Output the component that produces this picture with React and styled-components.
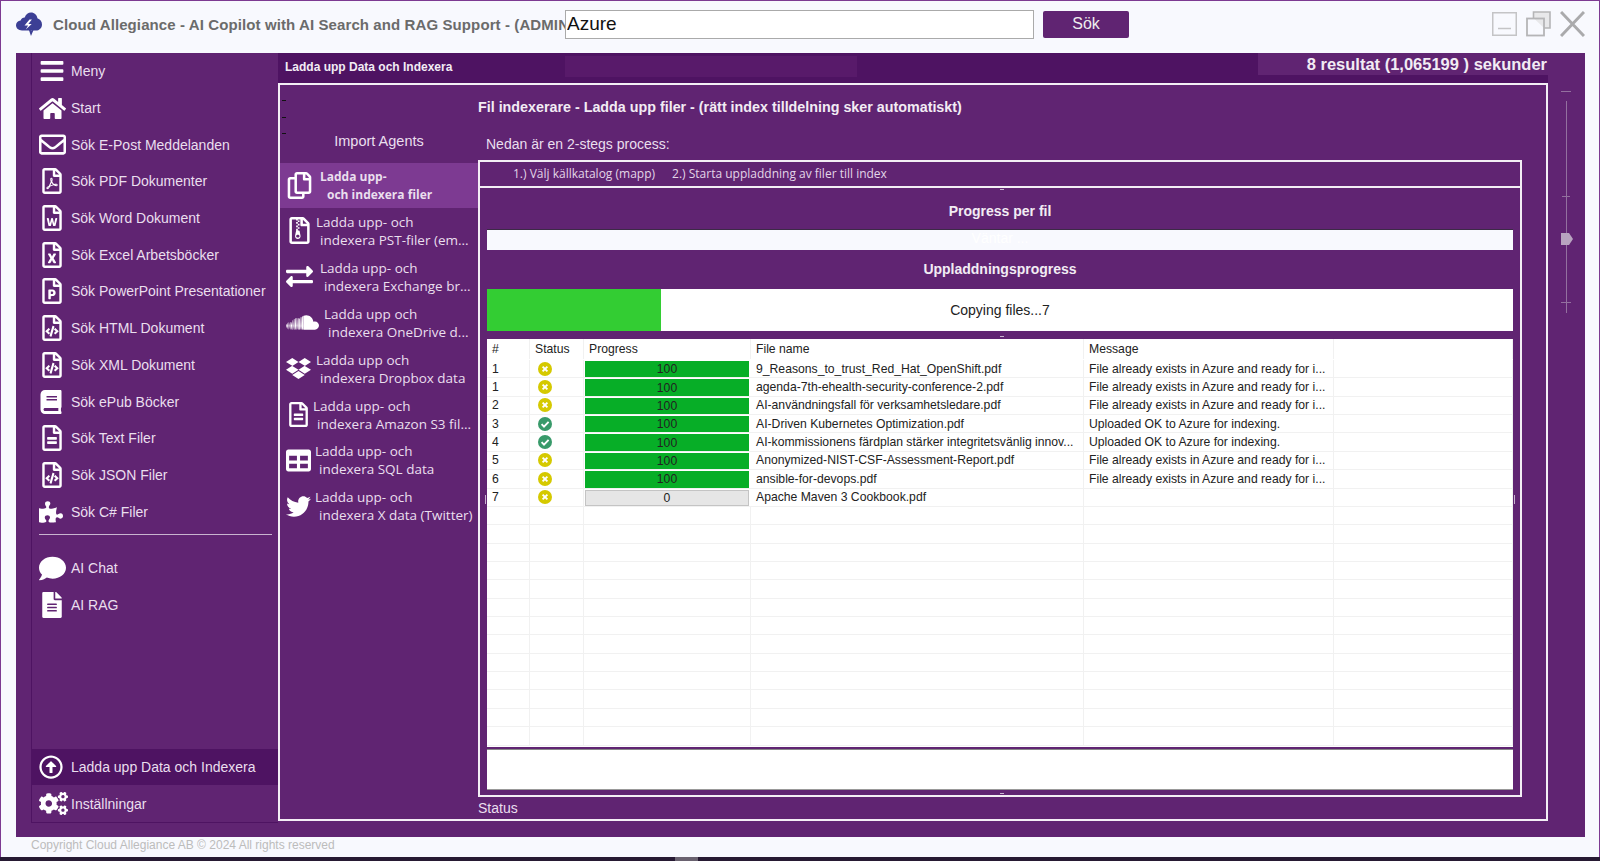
import styled, { createGlobalStyle } from "styled-components";
import {
  FaBars,
  FaHome,
  FaRegEnvelope,
  FaRegFilePdf,
  FaRegFileWord,
  FaRegFileExcel,
  FaRegFilePowerpoint,
  FaRegFileCode,
  FaBook,
  FaRegFileAlt,
  FaPuzzlePiece,
  FaComment,
  FaFileAlt,
  FaRegArrowAltCircleUp,
  FaCogs,
  FaRegCopy,
  FaRegFileArchive,
  FaExchangeAlt,
  FaSoundcloud,
  FaDropbox,
  FaTable,
  FaTwitter,
} from "react-icons/fa";

const purple = "#602472";
const dark = "#4e1362";
const light = "#7d3a92";
const paper = "#f8f9fe";

const GlobalStyle = createGlobalStyle`
  html, body {
    margin: 0;
    padding: 0;
    overflow: hidden;
    background: ${paper};
  }
  * {
    box-sizing: border-box;
  }
`;

const Window = styled.div`
  width: 1600px;
  height: 861px;
  display: flex;
  flex-direction: column;
  background: ${paper};
  border-top: 1px solid ${light};
  border-left: 1px solid ${light};
  border-right: 1px solid ${light};
  font-family: "Liberation Sans", Arial, sans-serif;
`;

const TitleBar = styled.header`
  height: 52px;
  flex: none;
  display: flex;
  align-items: center;
  padding: 0 0 6px 15px;
`;

const Logo = styled.svg`
  width: 26px;
  height: 24px;
  flex: none;
`;

const AppTitle = styled.div`
  width: 512px;
  margin-left: 11px;
  flex: none;
  overflow: hidden;
  white-space: nowrap;
  font-size: 15px;
  font-weight: 700;
  letter-spacing: 0.1px;
  color: #6b6b6b;
`;

const SearchInput = styled.input`
  width: 469px;
  height: 29px;
  flex: none;
  padding: 0 1px;
  border: 1px solid #aaa;
  background: #fff;
  outline: none;
  font-family: "Liberation Sans", Arial, sans-serif;
  font-size: 19px;
  color: #111;
`;

const SearchButton = styled.button`
  width: 86px;
  height: 27px;
  margin-left: 9px;
  flex: none;
  border: none;
  border-radius: 2px;
  background: ${purple};
  color: #eee;
  font-family: "Liberation Sans", Arial, sans-serif;
  font-size: 16px;
`;

const WindowButtons = styled.div`
  margin-left: auto;
  margin-right: 14px;
  display: flex;
  align-items: center;
  gap: 9px;
`;

const WindowIcon = styled.svg`
  width: 25px;
  height: 26px;
  display: block;
`;

const Main = styled.main`
  flex: 1;
  min-height: 0;
  margin: 0 14px 0 15px;
  padding-left: 15px;
  display: flex;
  background: ${purple};
`;

const Nav = styled.nav`
  width: 247px;
  flex: none;
  margin-bottom: 14px;
  display: flex;
  flex-direction: column;
  border-left: 1px solid ${dark};
  border-bottom: 1px solid ${dark};
`;

const NavRow = styled.div`
  height: 36.7px;
  flex: none;
  display: flex;
  align-items: center;
  padding-left: 7px;
  background: ${(props) => (props.$active ? dark : "transparent")};
  color: #eadfee;
  font-size: 14px;
  white-space: nowrap;
`;

const NavIcon = styled.span`
  width: 32px;
  flex: none;
  display: flex;
  align-items: center;
  color: #fff;
  font-size: ${(props) => props.$size || 25}px;
`;

const NavDivider = styled.div`
  height: 1px;
  margin: 4px 6px 15px 7px;
  background: #c9b4d0;
  flex: none;
`;

const NavSpacer = styled.div`
  flex: 1;
`;

const Content = styled.section`
  width: 1270px;
  flex: none;
  display: flex;
  flex-direction: column;
`;

const HeaderStrip = styled.div`
  height: 30px;
  flex: none;
  display: flex;
  background: ${dark};
  color: #f2ecf4;
`;

const PageName = styled.div`
  width: 287px;
  padding: 7px 0 0 7px;
  flex: none;
  font-size: 12px;
  font-weight: 700;
`;

const HeaderPatch = styled.div`
  width: 292px;
  height: 21px;
  margin-top: 3px;
  flex: none;
  background: #581a6a;
`;

const ResultBox = styled.div`
  width: 290px;
  height: 22px;
  margin-left: auto;
  padding-right: 1px;
  flex: none;
  text-align: right;
  background: ${purple};
  color: #f2ecf4;
  font-size: 16.5px;
  font-weight: 700;
  line-height: 22px;
  white-space: nowrap;
`;

const Panel = styled.div`
  position: relative;
  height: 738px;
  flex: none;
  display: flex;
  border: 2px solid #f3eef5;
`;

const GripTick = styled.i`
  position: absolute;
  left: 2px;
  top: ${(props) => props.$top}px;
  width: 4px;
  height: 1px;
  background: #111;
`;

const Agents = styled.aside`
  width: 198px;
  flex: none;
  display: flex;
  flex-direction: column;
`;

const AgentsTitle = styled.div`
  height: 78px;
  flex: none;
  padding-top: 48px;
  text-align: center;
  color: #eadfee;
  font-size: 14.5px;
`;

const AgentRow = styled.div`
  height: ${(props) => (props.$active ? 45 : 45.9)}px;
  flex: none;
  display: flex;
  align-items: center;
  background: ${(props) => (props.$active ? light : "transparent")};
  padding-left: 6px;
  color: #eadfee;
  font-family: "Open Sans", "Noto Sans", sans-serif;
  font-size: ${(props) => (props.$active ? 12 : 13.5)}px;
  font-weight: ${(props) => (props.$active ? 700 : 400)};
  line-height: 18px;
  white-space: nowrap;
`;

const AgentIcon = styled.span`
  width: ${(props) => props.$width}px;
  flex: none;
  display: flex;
  color: #fff;
  font-size: ${(props) => props.$size || 27}px;
`;

const AgentLine = styled.div`
  padding-left: ${(props) => (props.$indent ? props.$indent : 0)}px;
`;

const Workspace = styled.div`
  flex: 1;
  min-width: 0;
  display: flex;
  flex-direction: column;
  padding-right: 24px;
`;

const PageTitle = styled.div`
  height: 43px;
  flex: none;
  padding-top: 14px;
  color: #f2ecf4;
  font-size: 14.3px;
  font-weight: 700;
`;

const Intro = styled.div`
  height: 32px;
  flex: none;
  padding: 8px 0 0 8px;
  color: #eadfee;
  font-size: 14px;
`;

const TabBox = styled.div`
  position: relative;
  height: 637px;
  flex: none;
  display: flex;
  flex-direction: column;
  border: 2px solid #f3eef5;
`;

const TabRow = styled.div`
  height: 26px;
  flex: none;
  display: flex;
  align-items: center;
  gap: 17px;
  padding: 0 0 1px 33px;
  border-bottom: 2px solid #f3eef5;
  color: #e3d6e8;
  font-family: "Open Sans", "Noto Sans", sans-serif;
  font-size: 12px;
`;

const TabBody = styled.div`
  flex: 1;
  min-height: 0;
  padding: 0 7px 0 7px;
  display: flex;
  flex-direction: column;
`;

const SectionTitle = styled.div`
  height: ${(props) => props.$height}px;
  flex: none;
  padding-top: ${(props) => props.$top}px;
  text-align: center;
  color: #f2ecf4;
  font-size: 14px;
  font-weight: 700;
`;

const FileBar = styled.div`
  height: 21px;
  flex: none;
  text-align: center;
  background: ${paper};
  border-top: 1px solid #3c2a46;
  color: #fff;
  font-size: 14px;
`;

const CopyBar = styled.div`
  position: relative;
  height: 42px;
  flex: none;
  display: flex;
  align-items: center;
  justify-content: center;
  background: #fff;
  color: #222;
  font-size: 14px;
`;

const CopyFill = styled.div`
  position: absolute;
  left: 0;
  top: 0;
  bottom: 0;
  background: #33cd33;
`;

const Grid = styled.div`
  height: 408px;
  flex: none;
  margin-top: 8px;
  background: #fff;
  overflow: hidden;
  color: #222;
  font-size: 12.2px;
`;

const GridRow = styled.div`
  height: ${(props) => (props.$head ? 21 : 18.37)}px;
  display: grid;
  grid-template-columns: 43px 54px 167px 333px 250px 1fr;
  border-bottom: 1px solid ${(props) => (props.$head ? "transparent" : "#f1f1f1")};
`;

const GridCell = styled.div`
  display: flex;
  align-items: center;
  justify-content: ${(props) => (props.$center ? "center" : "flex-start")};
  padding-left: ${(props) => (props.$center ? 0 : 5)}px;
  border-right: 1px solid #f1f1f1;
  white-space: nowrap;
  overflow: hidden;
`;

const ProgressCell = styled.div`
  margin: 1px 2px 0 1px;
  display: flex;
  align-items: center;
  justify-content: center;
  background: ${(props) => (props.$value > 0 ? "#07ae27" : "#e6e6e6")};
  border: 1px solid ${(props) => (props.$value > 0 ? "#07ae27" : "#c4c4c4")};
`;

const StatusIcon = styled.svg`
  width: 14px;
  height: 14px;
  margin-left: 3px;
  flex: none;
`;

const MessageBox = styled.div`
  height: 41px;
  flex: none;
  margin-top: 2px;
  background: #fff;
  border-top: 1px solid #888;
  border-bottom: 1px solid #999;
`;

const StatusLine = styled.div`
  flex: none;
  padding-top: 3px;
  color: #eadfee;
  font-size: 14px;
`;

const Slider = styled.div`
  position: relative;
  width: 37px;
  flex: none;
  height: 216px;
  margin-top: 30px;
`;

const SliderTrack = styled.div`
  position: absolute;
  left: 18px;
  top: 18px;
  width: 1px;
  height: 212px;
  background: #93709f;
`;

const SliderMark = styled.div`
  position: absolute;
  left: ${(props) => props.$left}px;
  top: ${(props) => props.$top}px;
  width: ${(props) => props.$width}px;
  height: 1px;
  background: #93709f;
`;

const SliderThumb = styled.svg`
  position: absolute;
  left: 13px;
  top: 150px;
  width: 12px;
  height: 12px;
`;

const CenterGrip = styled.i`
  position: absolute;
  left: 50%;
  top: ${(props) => props.$top}px;
  width: 4px;
  height: 1px;
  background: #c9b4d0;
`;

const SideGrip = styled.i`
  position: absolute;
  ${(props) => props.$side}: 5px;
  top: 333px;
  width: 1px;
  height: 9px;
  background: #c9b4d0;
`;

const Footer = styled.footer`
  height: 20px;
  flex: none;
  padding: 0 0 0 30px;
  color: #bcbcbc;
  font-size: 12px;
  line-height: 17px;
`;

const TaskStrip = styled.div`
  height: 4px;
  flex: none;
  margin: 0 -1px;
  padding-left: 660px;
  background: #271a33;
`;

const TaskItem = styled.div`
  width: 23px;
  height: 4px;
  margin-left: 15px;
  background: #6a6270;
`;

const navTop = [
  ["Meny", FaBars, 26],
  ["Start", FaHome, 27],
  ["Sök E-Post Meddelanden", FaRegEnvelope, 27],
  ["Sök PDF Dokumenter", FaRegFilePdf, 26],
  ["Sök Word Dokument", FaRegFileWord, 26],
  ["Sök Excel Arbetsböcker", FaRegFileExcel, 26],
  ["Sök PowerPoint Presentationer", FaRegFilePowerpoint, 26],
  ["Sök HTML Dokument", FaRegFileCode, 26],
  ["Sök XML Dokument", FaRegFileCode, 26],
  ["Sök ePub Böcker", FaBook, 24],
  ["Sök Text Filer", FaRegFileAlt, 26],
  ["Sök JSON Filer", FaRegFileCode, 26],
  ["Sök C# Filer", FaPuzzlePiece, 24],
];

const agents = [
  { lines: ["Ladda upp- och", "indexera PST-filer (em..."], Icon: FaRegFileArchive, width: 30, size: 27 },
  { lines: ["Ladda upp- och", "indexera Exchange br..."], Icon: FaExchangeAlt, width: 34, size: 27 },
  { lines: ["Ladda upp och", "indexera OneDrive d..."], Icon: FaSoundcloud, width: 38, size: 33 },
  { lines: ["Ladda upp och", "indexera Dropbox data"], Icon: FaDropbox, width: 30, size: 25 },
  { lines: ["Ladda upp- och", "indexera Amazon S3 fil..."], Icon: FaRegFileAlt, width: 27, size: 25 },
  { lines: ["Ladda upp- och", "indexera SQL data"], Icon: FaTable, width: 29, size: 25 },
  { lines: ["Ladda upp- och", "indexera X data (Twitter)"], Icon: FaTwitter, width: 29, size: 25 },
];

const existsMsg = "File already exists in Azure and ready for i...";
const okMsg = "Uploaded OK to Azure for indexing.";

const files = [
  { id: 1, ok: false, value: 100, name: "9_Reasons_to_trust_Red_Hat_OpenShift.pdf", message: existsMsg },
  { id: 1, ok: false, value: 100, name: "agenda-7th-ehealth-security-conference-2.pdf", message: existsMsg },
  { id: 2, ok: false, value: 100, name: "AI-användningsfall för verksamhetsledare.pdf", message: existsMsg },
  { id: 3, ok: true, value: 100, name: "AI-Driven Kubernetes Optimization.pdf", message: okMsg },
  { id: 4, ok: true, value: 100, name: "AI-kommissionens färdplan stärker integritetsvänlig innov...", message: okMsg },
  { id: 5, ok: false, value: 100, name: "Anonymized-NIST-CSF-Assessment-Report.pdf", message: existsMsg },
  { id: 6, ok: false, value: 100, name: "ansible-for-devops.pdf", message: existsMsg },
  { id: 7, ok: false, value: 0, name: "Apache Maven 3 Cookbook.pdf", message: "" },
];

const emptyRows = Array.from({ length: 13 }, (_, i) => i);

function Status({ ok }) {
  return (
    <StatusIcon viewBox="0 0 14 14">
      <circle cx="7" cy="7" r="7" fill={ok ? "#389a6a" : "#d5c900"} />
      {ok ? (
        <path d="M3.6 7.2 6 9.6 10.6 4.9" fill="none" stroke="#fff" strokeWidth="1.9" />
      ) : (
        <path d="M4.6 4.6 9.4 9.4M9.4 4.6 4.6 9.4" fill="none" stroke="#fff" strokeWidth="1.9" />
      )}
    </StatusIcon>
  );
}

export default function App() {
  return (
    <>
      <GlobalStyle />
      <Window>
        <TitleBar>
          <Logo viewBox="0 0 26 24">
            <path
              d="M6 18.5C2.5 18.5 0 16.3 0 13.3 0 10.7 2 8.7 4.6 8.4 5.2 6.6 6.8 5.4 8.7 5.4 9.9 2.4 12.3 0.6 15 0.6c3.4 0 6 2.5 6.4 5.7C24 7.2 26 9.5 26 12.4c0 3.4-2.6 6.1-6.2 6.1z"
              fill="#3c3f95"
            />
            <path d="M13.5 7.5 8.5 13.5h3.6L9.8 17.5l5.9-5.4h-3.4l3.6-4.6z" fill="#fff" />
            <path d="M12.4 16.5 15 24l2.6-6.2-2.4.8z" fill="#3c3f95" />
          </Logo>
          <AppTitle>Cloud Allegiance - AI Copilot with AI Search and RAG Support - (ADMIN)</AppTitle>
          <SearchInput defaultValue="Azure" />
          <SearchButton>Sök</SearchButton>
          <WindowButtons>
            <WindowIcon viewBox="0 0 25 26">
              <rect x="0.75" y="1.75" width="23.5" height="22.5" fill="none" stroke="#c4c4c6" strokeWidth="1.5" />
              <path d="M6 17.5h13" stroke="#c4c4c6" strokeWidth="1.5" />
            </WindowIcon>
            <WindowIcon viewBox="0 0 25 26">
              <path d="M7.5 7V1h16.5v16h-6" fill="#e8e8ea" stroke="#b5b5b7" strokeWidth="1.6" />
              <rect x="1" y="7.5" width="17" height="17" fill="none" stroke="#b5b5b7" strokeWidth="1.8" />
            </WindowIcon>
            <WindowIcon viewBox="0 0 25 26">
              <path d="M1 1 24 25M24 1 1 25" fill="none" stroke="#aaaaac" strokeWidth="3" />
            </WindowIcon>
          </WindowButtons>
        </TitleBar>
        <Main>
          <Nav>
            {navTop.map(([label, Icon, size]) => (
              <NavRow key={label}>
                <NavIcon $size={size}>
                  <Icon />
                </NavIcon>
                {label}
              </NavRow>
            ))}
            <NavDivider />
            <NavRow>
              <NavIcon $size={27}>
                <FaComment />
              </NavIcon>
              AI Chat
            </NavRow>
            <NavRow>
              <NavIcon $size={26}>
                <FaFileAlt />
              </NavIcon>
              AI RAG
            </NavRow>
            <NavSpacer />
            <NavRow $active>
              <NavIcon $size={24}>
                <FaRegArrowAltCircleUp />
              </NavIcon>
              Ladda upp Data och Indexera
            </NavRow>
            <NavRow>
              <NavIcon $size={29}>
                <FaCogs />
              </NavIcon>
              Inställningar
            </NavRow>
          </Nav>
          <Content>
            <HeaderStrip>
              <PageName>Ladda upp Data och Indexera</PageName>
              <HeaderPatch />
              <ResultBox>8 resultat (1,065199 ) sekunder</ResultBox>
            </HeaderStrip>
            <Panel>
              <GripTick $top={15} />
              <GripTick $top={32} />
              <GripTick $top={48} />
              <Agents>
                <AgentsTitle>Import Agents</AgentsTitle>
                <AgentRow $active>
                  <AgentIcon $width={34} $size={27}>
                    <FaRegCopy />
                  </AgentIcon>
                  <div>
                    <AgentLine>Ladda upp-</AgentLine>
                    <AgentLine $indent={7}>och indexera filer</AgentLine>
                  </div>
                </AgentRow>
                {agents.map(({ lines, Icon, width, size }) => (
                  <AgentRow key={lines[1]}>
                    <AgentIcon $width={width} $size={size}>
                      <Icon />
                    </AgentIcon>
                    <div>
                      <AgentLine>{lines[0]}</AgentLine>
                      <AgentLine $indent={4}>{lines[1]}</AgentLine>
                    </div>
                  </AgentRow>
                ))}
              </Agents>
              <Workspace>
                <PageTitle>Fil indexerare - Ladda upp filer - (rätt index tilldelning sker automatiskt)</PageTitle>
                <Intro>Nedan är en 2-stegs process:</Intro>
                <TabBox>
                  <CenterGrip $top={27} />
                  <CenterGrip $top={174} />
                  <CenterGrip $top={631} />
                  <SideGrip $side="left" />
                  <SideGrip $side="right" />
                  <TabRow>
                    <span>1.) Välj källkatalog (mapp)</span>
                    <span>2.) Starta uppladdning av filer till index</span>
                  </TabRow>
                  <TabBody>
                    <SectionTitle $height={41} $top={15}>
                      Progress per fil
                    </SectionTitle>
                    <FileBar>Väntar ...</FileBar>
                    <SectionTitle $height={39} $top={11}>
                      Uppladdningsprogress
                    </SectionTitle>
                    <CopyBar>
                      <CopyFill style={{ width: "17%" }} />
                      Copying files...7
                    </CopyBar>
                    <Grid>
                      <GridRow $head>
                        <GridCell>#</GridCell>
                        <GridCell>Status</GridCell>
                        <GridCell>Progress</GridCell>
                        <GridCell>File name</GridCell>
                        <GridCell>Message</GridCell>
                        <GridCell />
                      </GridRow>
                      {files.map((file) => (
                        <GridRow key={file.name}>
                          <GridCell>{file.id}</GridCell>
                          <GridCell>
                            <Status ok={file.ok} />
                          </GridCell>
                          <ProgressCell $value={file.value}>{file.value}</ProgressCell>
                          <GridCell>{file.name}</GridCell>
                          <GridCell>{file.message}</GridCell>
                          <GridCell />
                        </GridRow>
                      ))}
                      {emptyRows.map((i) => (
                        <GridRow key={i}>
                          <GridCell />
                          <GridCell />
                          <GridCell />
                          <GridCell />
                          <GridCell />
                          <GridCell />
                        </GridRow>
                      ))}
                    </Grid>
                    <MessageBox />
                  </TabBody>
                </TabBox>
                <StatusLine>Status</StatusLine>
              </Workspace>
            </Panel>
          </Content>
          <Slider>
            <SliderMark $left={13} $top={8} $width={10} />
            <SliderTrack />
            <SliderMark $left={14} $top={113} $width={8} />
            <SliderThumb viewBox="0 0 12 12">
              <path d="M0 0h8l4 6-4 6H0z" fill="#b8a4c0" />
            </SliderThumb>
            <SliderMark $left={13} $top={219} $width={10} />
          </Slider>
        </Main>
        <Footer>Copyright Cloud Allegiance AB © 2024 All rights reserved</Footer>
        <TaskStrip>
          <TaskItem />
        </TaskStrip>
      </Window>
    </>
  );
}
